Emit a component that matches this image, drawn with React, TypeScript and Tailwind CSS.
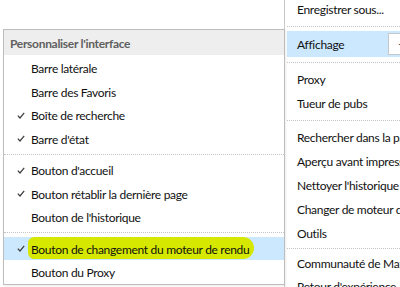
import React from "react"

const Check = () => (
  <svg width="8" height="7" viewBox="0 0 8 7" className="absolute left-[13px] top-1/2 -translate-y-[3px]">
    <path d="M0.8 3.6 L3 6 L7.2 0.8" fill="none" stroke="#3c3c3c" strokeWidth="1.2" />
  </svg>
)

const Sep = ({ h = "h-[8px]" }: { h?: string }) => (
  <div className={`${h} shrink-0 flex items-center`}>
    <div className="w-full border-t border-dotted border-[#c4c4c4]" />
  </div>
)

const Row = ({ h = "h-[24px]", children }: { h?: string; children: React.ReactNode }) => (
  <div className={`${h} shrink-0 flex items-center pl-[10px] pt-[1px]`}>{children}</div>
)

type Item = { label: string; checked?: boolean; sep?: boolean }

const subItems: Item[] = [
  { label: "Barre latérale" },
  { label: "Barre des Favoris" },
  { label: "Boîte de recherche", checked: true },
  { label: "Barre d'état", checked: true },
  { label: "", sep: true },
  { label: "Bouton d'accueil", checked: true },
  { label: "Bouton rétablir la dernière page", checked: true },
  { label: "Bouton de l'historique" },
  { label: "", sep: true },
]

export default function App() {
  return (
    <div className="relative w-[400px] h-[287px] overflow-hidden bg-white text-[12px] tracking-[-0.3px] text-[#111] font-['Lato',sans-serif]">
      {/* Main menu */}
      <div className="ml-[284px] h-full border-l border-[#c9c9c9] pl-[2px] flex flex-col whitespace-nowrap">
        <div className="h-[22px] shrink-0 -mt-[1px] flex items-center pl-[10px]">Enregistrer sous...</div>
        <Sep h="h-[10px]" />
        <div className="h-[26px] shrink-0 flex items-center pl-[10px] pt-[1px] bg-[#cce8ff] relative">
          Affichage
          <div className="absolute left-[101px] top-[2px] h-[22px] w-[40px] bg-white border border-[#c6c6c6] flex items-center pl-[9px] text-[#222]">
            −
          </div>
        </div>
        <Sep h="h-[10px]" />
        <Row>Proxy</Row>
        <Row h="h-[25px]">Tueur de pubs</Row>
        <Sep h="h-[9px]" />
        <Row>Rechercher dans la page</Row>
        <Row>Aperçu avant impression</Row>
        <Row>Nettoyer l'historique de navigation</Row>
        <Row>Changer de moteur de rendu</Row>
        <Row>Outils</Row>
        <Sep h="h-[7px]" />
        <Row h="h-[22px]">Communauté de Maxthon</Row>
        <Row>Retour d'expérience</Row>
      </div>

      {/* Submenu Personnaliser l'interface */}
      <div className="absolute left-[3px] top-[29px] w-[282px] border border-[#bdbdbd] bg-white shadow-[1px_1px_2px_rgba(0,0,0,0.08)] whitespace-nowrap">
        <div className="h-[25px] bg-[#eeeeee] flex items-center pl-[6px] pt-[3px] text-[#5f5f5f] font-bold">
          Personnaliser l'interface
        </div>
        <div className="pt-[1px]">
          {subItems.map((it, i) =>
            it.sep ? (
              <Sep key={i} />
            ) : (
              <div key={i} className="relative h-[23.5px] flex items-center pl-[27px] pt-[3px]">
                {it.checked && <Check />}
                {it.label}
              </div>
            )
          )}
          <div className="relative h-[23.5px] flex items-center pl-[27px] pt-[3px] bg-[#cce8ff]">
            <Check />
            <span className="absolute left-[24px] top-[0px] h-[22px] w-[226px] bg-[#d6e800] rounded-l-[8px] rounded-r-[14px]" />
            <span className="relative">Bouton de changement du moteur de rendu</span>
          </div>
          <div className="relative h-[23.5px] flex items-center pl-[27px] pt-[3px]">Bouton du Proxy</div>
        </div>
      </div>
    </div>
  )
}
